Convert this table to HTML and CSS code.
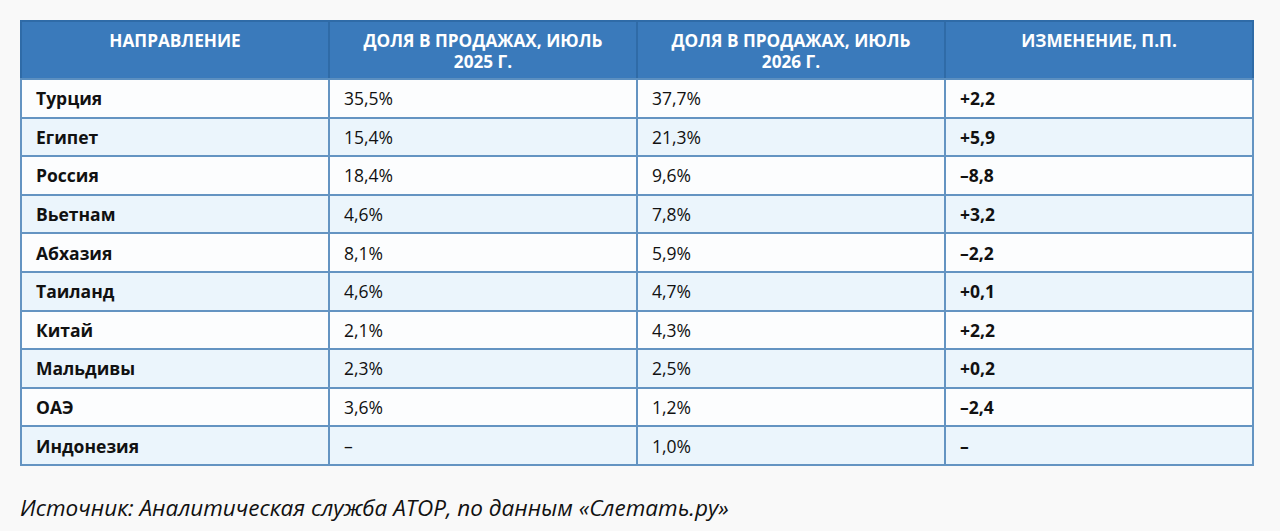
FILE: index.html
```html
<!DOCTYPE html>
<html lang="ru">
<head>
<meta charset="utf-8">
<link rel="stylesheet" href="styles.css">
</head>
<body>
<main class="page">
  <table class="share">
    <thead>
      <tr>
        <th>НАПРАВЛЕНИЕ</th>
        <th>ДОЛЯ В ПРОДАЖАХ, ИЮЛЬ<br>2025 Г.</th>
        <th>ДОЛЯ В ПРОДАЖАХ, ИЮЛЬ<br>2026 Г.</th>
        <th>ИЗМЕНЕНИЕ, П.П.</th>
      </tr>
    </thead>
    <tbody>
      <tr><td class="name">Турция</td><td>35,5%</td><td>37,7%</td><td class="delta">+2,2</td></tr>
      <tr><td class="name">Египет</td><td>15,4%</td><td>21,3%</td><td class="delta">+5,9</td></tr>
      <tr><td class="name">Россия</td><td>18,4%</td><td>9,6%</td><td class="delta">–8,8</td></tr>
      <tr><td class="name">Вьетнам</td><td>4,6%</td><td>7,8%</td><td class="delta">+3,2</td></tr>
      <tr><td class="name">Абхазия</td><td>8,1%</td><td>5,9%</td><td class="delta">–2,2</td></tr>
      <tr><td class="name">Таиланд</td><td>4,6%</td><td>4,7%</td><td class="delta">+0,1</td></tr>
      <tr><td class="name">Китай</td><td>2,1%</td><td>4,3%</td><td class="delta">+2,2</td></tr>
      <tr><td class="name">Мальдивы</td><td>2,3%</td><td>2,5%</td><td class="delta">+0,2</td></tr>
      <tr><td class="name">ОАЭ</td><td>3,6%</td><td>1,2%</td><td class="delta">–2,4</td></tr>
      <tr><td class="name">Индонезия</td><td>–</td><td>1,0%</td><td class="delta">–</td></tr>
    </tbody>
  </table>
  <p class="source">Источник: Аналитическая служба АТОР, по данным «Слетать.ру»</p>
</main>
</body>
</html>
```
FILE: styles.css
```css
html, body {
  margin: 0;
  padding: 0;
  background: #f9f9f9;
}
body {
  font-family: "Open Sans", "Noto Sans", sans-serif;
  color: #111;
}
.page {
  padding: 20px 26px 0 20px;
}
.share {
  width: 1234px;
  border-collapse: collapse;
  table-layout: fixed;
  border: 2px solid #5b8cbb;
}
.share th, .share td {
  border: 2px solid #6494c2;
}
.share th {
  background: #3a7abb;
  border-color: #2f6ba7;
  border-bottom-color: #5b8fc0;
  color: #fff;
  font-weight: 700;
  font-size: 17.2px;
  line-height: 21px;
  height: 58px;
  box-sizing: border-box;
  vertical-align: top;
  padding: 8px 10px 0;
  text-align: center;
}
.share td {
  height: 36.6px;
  padding: 0 14px;
  font-size: 17.5px;
  vertical-align: middle;
  background: #fcfdfe;
}
.share tbody tr:nth-child(even) td {
  background: #ebf5fc;
}
.share td.name, .share td.delta {
  font-weight: 700;
}
.source {
  margin: 26px 0 0;
  font-size: 22.5px;
  font-style: italic;
  color: #111;
}
```
